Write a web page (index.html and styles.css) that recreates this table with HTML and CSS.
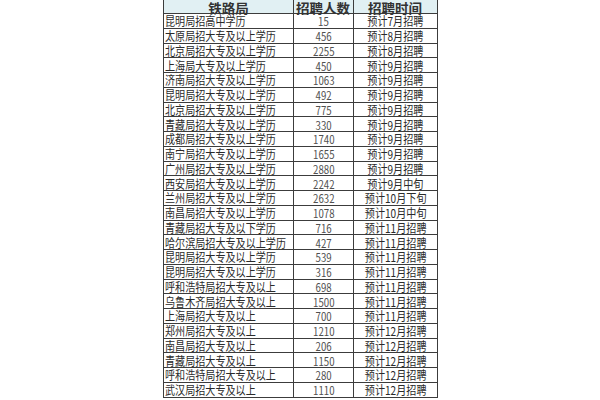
FILE: index.html
```html
<!DOCTYPE html>
<html lang="zh">
<head>
<meta charset="utf-8">
<link rel="stylesheet" href="styles.css">
</head>
<body>
<div class="sheet">
  <div class="cell head"><span>铁路局</span></div><div class="cell head"><span>招聘人数</span></div><div class="cell head"><span>招聘时间</span></div>
  <div class="cell name"><span>昆明局招高中学历</span></div><div class="cell num"><span>15</span></div><div class="cell time"><span>预计7月招聘</span></div>
  <div class="cell name"><span>太原局招大专及以上学历</span></div><div class="cell num"><span>456</span></div><div class="cell time"><span>预计8月招聘</span></div>
  <div class="cell name"><span>北京局招大专及以上学历</span></div><div class="cell num"><span>2255</span></div><div class="cell time"><span>预计8月招聘</span></div>
  <div class="cell name"><span>上海局大专及以上学历</span></div><div class="cell num"><span>450</span></div><div class="cell time"><span>预计9月招聘</span></div>
  <div class="cell name"><span>济南局招大专及以上学历</span></div><div class="cell num"><span>1063</span></div><div class="cell time"><span>预计9月招聘</span></div>
  <div class="cell name"><span>昆明局招大专及以上学历</span></div><div class="cell num"><span>492</span></div><div class="cell time"><span>预计9月招聘</span></div>
  <div class="cell name"><span>北京局招大专及以上学历</span></div><div class="cell num"><span>775</span></div><div class="cell time"><span>预计9月招聘</span></div>
  <div class="cell name"><span>青藏局招大专及以上学历</span></div><div class="cell num"><span>330</span></div><div class="cell time"><span>预计9月招聘</span></div>
  <div class="cell name"><span>成都局招大专及以上学历</span></div><div class="cell num"><span>1740</span></div><div class="cell time"><span>预计9月招聘</span></div>
  <div class="cell name"><span>南宁局招大专及以上学历</span></div><div class="cell num"><span>1655</span></div><div class="cell time"><span>预计9月招聘</span></div>
  <div class="cell name"><span>广州局招大专及以上学历</span></div><div class="cell num"><span>2880</span></div><div class="cell time"><span>预计9月招聘</span></div>
  <div class="cell name"><span>西安局招大专及以上学历</span></div><div class="cell num"><span>2242</span></div><div class="cell time"><span>预计9月中旬</span></div>
  <div class="cell name"><span>兰州局招大专及以上学历</span></div><div class="cell num"><span>2632</span></div><div class="cell time"><span>预计10月下旬</span></div>
  <div class="cell name"><span>南昌局招大专及以上学历</span></div><div class="cell num"><span>1078</span></div><div class="cell time"><span>预计10月中旬</span></div>
  <div class="cell name"><span>青藏局招大专及以下学历</span></div><div class="cell num"><span>716</span></div><div class="cell time"><span>预计11月招聘</span></div>
  <div class="cell name"><span>哈尔滨局招大专及以上学历</span></div><div class="cell num"><span>427</span></div><div class="cell time"><span>预计11月招聘</span></div>
  <div class="cell name"><span>昆明局招大专及以上学历</span></div><div class="cell num"><span>539</span></div><div class="cell time"><span>预计11月招聘</span></div>
  <div class="cell name"><span>昆明局招大专及以上学历</span></div><div class="cell num"><span>316</span></div><div class="cell time"><span>预计11月招聘</span></div>
  <div class="cell name"><span>呼和浩特局招大专及以上</span></div><div class="cell num"><span>698</span></div><div class="cell time"><span>预计11月招聘</span></div>
  <div class="cell name"><span>乌鲁木齐局招大专及以上</span></div><div class="cell num"><span>1500</span></div><div class="cell time"><span>预计11月招聘</span></div>
  <div class="cell name"><span>上海局招大专及以上</span></div><div class="cell num"><span>700</span></div><div class="cell time"><span>预计11月招聘</span></div>
  <div class="cell name"><span>郑州局招大专及以上</span></div><div class="cell num"><span>1210</span></div><div class="cell time"><span>预计12月招聘</span></div>
  <div class="cell name"><span>南昌局招大专及以上</span></div><div class="cell num"><span>206</span></div><div class="cell time"><span>预计12月招聘</span></div>
  <div class="cell name"><span>青藏局招大专及以上</span></div><div class="cell num"><span>1150</span></div><div class="cell time"><span>预计12月招聘</span></div>
  <div class="cell name"><span>呼和浩特局招大专及以上</span></div><div class="cell num"><span>280</span></div><div class="cell time"><span>预计12月招聘</span></div>
  <div class="cell name"><span>武汉局招大专及以上</span></div><div class="cell num"><span>1110</span></div><div class="cell time"><span>预计12月招聘</span></div>
</div>
</body>
</html>
```

FILE: styles.css
```css
html, body {
  margin: 0;
  padding: 0;
  background: #ffffff;
}
body {
  width: 600px;
  height: 400px;
  overflow: hidden;
  font-family: "Noto Sans CJK SC", "Noto Sans", sans-serif;
  color: #2a2a2a;
}
.sheet {
  display: grid;
  grid-template-columns: 130px 60px 84px;
  grid-template-rows: 14px repeat(26, 14.75px);
  width: 274px;
  margin-left: 163px;
  border-left: 1px solid #3c3c3c;
}
.cell {
  box-sizing: border-box;
  border-right: 1px solid #3c3c3c;
  border-bottom: 1px solid #3c3c3c;
  display: flex;
  align-items: center;
  white-space: nowrap;
  font-size: 12px;
  line-height: 12px;
}
.cell span {
  display: inline-block;
  transform: scaleX(0.84);
}
.head {
  background: #e1f0f3;
  justify-content: center;
  font-size: 13px;
  line-height: 13px;
  font-weight: bold;
  color: #333333;
  padding-top: 1px;
}
.head span {
  transform: scaleX(1.04);
  transform-origin: center;
}
.name {
  justify-content: flex-start;
  padding-left: 1px;
  padding-top: 1px;
}
.name span {
  transform-origin: left center;
}
.num {
  justify-content: center;
  color: #505050;
  font-size: 11.5px;
  padding-top: 1px;
}
.num span {
  transform-origin: center;
}
.time {
  justify-content: center;
  padding-top: 1px;
}
.time span {
  transform-origin: center;
}
```
